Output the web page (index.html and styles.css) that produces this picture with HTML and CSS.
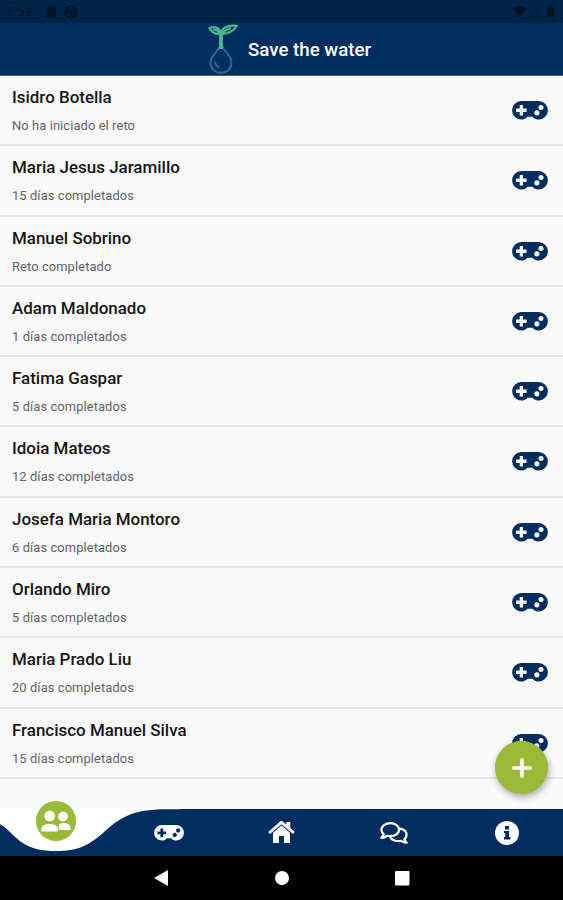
FILE: index.html
```
<!DOCTYPE html>
<html lang="es">
<head>
<meta charset="utf-8">
<title>Save the water</title>
<link rel="stylesheet" href="styles.css">
</head>
<body>
<svg class="defs" aria-hidden="true">
  <symbol id="pad" viewBox="0 0 36 19">
    <path fill="currentColor" fill-rule="evenodd" d="M9.4 0H26.600A9.200 9.200 0 0 1 26.600 18.600C24.200 18.600 22 17.500 20.500 15.700H15.500C14 17.500 11.800 18.600 9.400 18.600A9.300 9.300 0 0 1 9.400 0ZM7.700 4V7.600H4.100V10.900H7.700V14.500H11V10.900H14.600V7.600H11V4ZM24.900 9.300a2.600 2.600 0 1 0 .01 0ZM29 3.900a2.600 2.600 0 1 0 .01 0Z"/>
  </symbol>
</svg>
<div class="screen">
  <div class="status">
    <span class="clock">8:52</span>
    <svg class="sd" viewBox="0 0 10 12"><path d="M3 0H10V12H0V3Z"/></svg>
    <svg class="sync" viewBox="0 0 14 14"><circle cx="7" cy="7" r="5.8"/><path d="M4 8V5.500Q7 2.500 10 6T7 10L5 7H8"/></svg>
    <svg class="signals" viewBox="0 0 42 13"><path d="M0 4Q6.500-2 13 4L6.500 12Z"/><path class="line" d="M16 11.500L25 2V11.500Z"/><path d="M34 2H36V0.500H39V2H41V12H34Z"/></svg>
  </div>
  <header class="header">
    <svg class="logo" viewBox="0 0 32 50">
      <path class="drop" d="M13.500 22C10 28 4.500 31 4.500 38A10.500 9.800 0 0 0 25.500 38C25.500 31 20 28 16.500 22"/>
      <path class="drop" d="M9 36.500C9.500 40 11 42 13.500 42.500"/>
      <path class="stem" d="M15 24V8"/>
      <path class="leaf" d="M15 8.500C10 9.500 6 8 3.500 3C9 1 14 3 15 8.500C16 2.500 22 0 31 .8C28 6 21 9.500 15 8.500ZM7 4.500Q12 5 15 8.500Q19 5 25 3"/>
    </svg>
    <h1>Save the water</h1>
  </header>
  <main class="list">
    <article class="row"><div><h2>Isidro Botella</h2><p>No ha iniciado el reto</p></div><svg class="pad"><use href="#pad"/></svg></article>
    <article class="row"><div><h2>Maria Jesus Jaramillo</h2><p>15 días completados</p></div><svg class="pad"><use href="#pad"/></svg></article>
    <article class="row"><div><h2>Manuel Sobrino</h2><p>Reto completado</p></div><svg class="pad"><use href="#pad"/></svg></article>
    <article class="row"><div><h2>Adam Maldonado</h2><p>1 días completados</p></div><svg class="pad"><use href="#pad"/></svg></article>
    <article class="row"><div><h2>Fatima Gaspar</h2><p>5 días completados</p></div><svg class="pad"><use href="#pad"/></svg></article>
    <article class="row"><div><h2>Idoia Mateos</h2><p>12 días completados</p></div><svg class="pad"><use href="#pad"/></svg></article>
    <article class="row"><div><h2>Josefa Maria Montoro</h2><p>6 días completados</p></div><svg class="pad"><use href="#pad"/></svg></article>
    <article class="row"><div><h2>Orlando Miro</h2><p>5 días completados</p></div><svg class="pad"><use href="#pad"/></svg></article>
    <article class="row"><div><h2>Maria Prado Liu</h2><p>20 días completados</p></div><svg class="pad"><use href="#pad"/></svg></article>
    <article class="row"><div><h2>Francisco Manuel Silva</h2><p>15 días completados</p></div><svg class="pad"><use href="#pad"/></svg></article>
    <button class="fab" aria-label="Añadir"><svg viewBox="0 0 20 20"><path d="M10 1.800V18.200M1.800 10H18.200"/></svg></button>
  </main>
  <nav class="tabs">
    <svg class="curve" viewBox="0 0 180 47"><path d="M0-1H180V.2H166C132 .2 119 9 103 24C88 37 77 42 56 42C33 42 23 36 11 24Q5 18 0 15Z"/></svg>
    <a class="tab active"><svg viewBox="0 0 40 40"><circle cx="20" cy="20" r="20" fill="#9aba38"/><g fill="#fff"><circle cx="27" cy="15.500" r="4.900"/><path d="M22.500 29V25Q23 22 27 22Q34.500 22 34.500 27V29Z"/><g stroke="#9aba38" stroke-width="1.200"><circle cx="13.700" cy="15" r="6"/><path d="M4.700 31V28Q4.700 22.500 13.500 22.500T22.500 28V31Z"/></g></g></svg></a>
    <a class="tab"><svg class="tab-pad"><use href="#pad"/></svg></a>
    <a class="tab"><svg class="home" viewBox="0 0 27 23"><path fill="#fff" d="M13.500 4.500L22 11.800V22H16V15H11V22H5V11.800ZM13.500 0Q14.500 0 15.200.7L18.500 3.600V1H22.300V7L26.800 11L25 13L13.500 3.200L2 13L.2 11L11.800.7Q12.500 0 13.500 0Z"/></svg></a>
    <a class="tab"><svg class="chat" viewBox="0 0 28 22"><path d="M10.500 1.200C5.500 1.200 1.400 4 1.400 7.700C1.400 9.500 2.300 11 3.700 12.200C3.300 13.600 2.400 14.800 1.300 15.800C3.300 15.800 5.500 15 6.900 13.800C13.500 15.300 19 12 19 7.700C19 4 15.500 1.200 10.500 1.200ZM19 6.300C23.500 7 26.600 9.500 26.600 12.800C26.600 14.500 25.800 16 24.400 17.200C24.800 18.600 25.600 19.700 26.700 20.700C24.700 20.700 22.600 20 21.200 18.800C16.500 20 11.500 18.300 9.700 14.500"/></svg></a>
    <a class="tab"><svg class="info" viewBox="0 0 24 24"><circle cx="12" cy="12" r="12" fill="#fff"/><path fill="#002d60" d="M10 5H14V8.600H10ZM9 10H14V16H15.300V18.500H9V16H10.300V12.300H9Z"/></svg></a>
  </nav>
  <footer class="system">
    <svg viewBox="0 0 14 16"><path d="M-1 8L13 0V16Z"/></svg>
    <svg viewBox="0 0 14 16"><circle cx="7" cy="8" r="7"/></svg>
    <svg viewBox="0 0 14 16"><rect y="1" width="14.500" height="14.500" rx="1"/></svg>
  </footer>
</div>
</body>
</html>
```
FILE: styles.css
```
* { box-sizing: border-box; }
body { margin: 0; font-family: Roboto, sans-serif; }
svg { display: block; overflow: visible; }
.defs { position: absolute; width: 0; height: 0; }
.screen { width: 563px; height: 900px; display: flex; flex-direction: column; overflow: hidden; background: #fafafa; }
.status { height: 23px; flex: none; display: flex; align-items: center; padding: 0 8px 0 7px; background: #002348; color: #00162d; fill: #001226; }
.clock { font-size: 12px; letter-spacing: .6px; width: 39px; }
.sd { width: 10px; height: 12px; }
.sync { width: 14px; height: 14px; margin-left: 8px; fill: none; stroke: #001226; stroke-width: 1.5; }
.signals { width: 42px; height: 13px; margin-left: auto; }
.signals .line { fill: none; stroke: #001226; }
.header { height: 53px; flex: none; display: flex; align-items: center; padding: 2px 0 0 206px; background: #002d60; border-bottom: 1px solid #4c5b87; }
.logo { width: 32px; height: 50px; fill: none; }
.drop { stroke: #246d91; stroke-width: 2; }
.stem { stroke: #4bb58d; stroke-width: 3.800; }
.leaf { stroke: #4bb58d; stroke-width: 2.200; stroke-linejoin: round; }
.header h1 { margin: 0 0 0 10px; color: #fff; font-size: 18.700px; line-height: 24px; font-weight: 500; }
.list { position: relative; flex: 1; min-height: 0; }
.row { height: 70.300px; display: flex; justify-content: space-between; padding: 0 15px 0 12px; border-bottom: 2px solid #e6e6e6; }
.row h2 { margin: 10px 0 0; font-size: 16.950px; line-height: 22px; font-weight: 500; color: #151515; }
.row p { margin: 9px 0 0; font-size: 12.900px; line-height: 18px; color: #626262; letter-spacing: .1px; }
.pad { width: 36px; height: 19px; margin-top: 25px; color: #002d60; }
.fab { position: absolute; right: 15px; bottom: 15px; width: 53px; height: 53px; border: 0; border-radius: 50%; display: grid; place-items: center; padding: 0; background: #9aba38; box-shadow: 1px 3px 7px #0005; }
.fab svg { width: 20px; height: 20px; }
.fab path { stroke: #fff; stroke-width: 3.600; stroke-linecap: round; }
.tabs { position: relative; height: 47px; flex: none; display: grid; grid-template-columns: repeat(5, 1fr); grid-template-rows: 47px; place-items: center; background: #002d60; color: #fff; }
.curve { position: absolute; left: 0; top: 0; width: 180px; height: 47px; fill: #fff; }
.tab { position: relative; }
.active { align-self: start; margin-top: -8px; }
.active svg { width: 40px; height: 40px; }
.tab-pad { width: 30px; height: 16px; }
.home { width: 27px; height: 23px; }
.chat { width: 28px; height: 22px; fill: none; stroke: #fff; stroke-width: 2.200; stroke-linejoin: round; }
.info { width: 24px; height: 24px; }
.system { height: 44px; flex: none; display: flex; justify-content: center; align-items: center; gap: 106px; background: #000; fill: #fff; }
.system svg { width: 14px; height: 16px; }
```
